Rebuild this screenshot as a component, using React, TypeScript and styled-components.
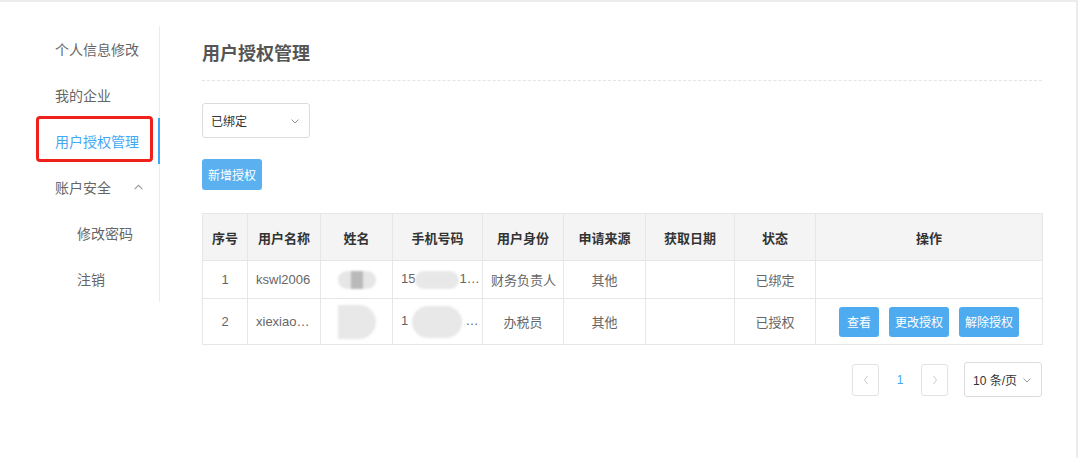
import React from 'react';
import styled, { createGlobalStyle } from 'styled-components';

const GlobalStyle = createGlobalStyle`
  html, body {
    margin: 0;
    padding: 0;
    background: #fff;
  }
  body {
    font-family: "Liberation Sans", "Noto Sans CJK SC", sans-serif;
  }
`;

const Page = styled.div`
  box-sizing: border-box;
  width: 1078px;
  height: 458px;
  border-top: 2px solid #ececec;
  border-right: 2px solid #ececec;
  display: flex;
  align-items: flex-start;
`;

const Side = styled.nav`
  margin-top: 24px;
  width: 160px;
  border-right: 1px solid #ebebeb;
  box-sizing: border-box;
  display: flex;
  flex-direction: column;
`;

const SideItem = styled.div<{ $active?: boolean; $sub?: boolean }>`
  position: relative;
  height: 46px;
  display: flex;
  align-items: center;
  justify-content: space-between;
  padding-left: ${(p) => (p.$sub ? '77px' : '55px')};
  padding-right: 14px;
  margin-right: -1px;
  font-size: 14px;
  color: ${(p) => (p.$active ? '#3fa9f5' : '#666')};
  border-right: 2px solid ${(p) => (p.$active ? '#3fa9f5' : 'transparent')};
`;

const Mark = styled.span`
  position: absolute;
  left: 36px;
  top: -2px;
  width: 117px;
  height: 46px;
  box-sizing: border-box;
  border: 3px solid #f0201a;
  border-radius: 4px;
`;

const Main = styled.main`
  margin-left: 42px;
  width: 840px;
  padding-top: 36px;
`;

const Title = styled.h1`
  margin: 0;
  font-size: 18px;
  line-height: 32px;
  font-weight: 600;
  color: #555;
  padding-bottom: 10px;
  border-bottom: 1px dashed #e4e4e4;
`;

const Select = styled.div<{ $w: number }>`
  box-sizing: border-box;
  width: ${(p) => p.$w}px;
  height: 35px;
  border: 1px solid #dcdcdc;
  border-radius: 3px;
  display: flex;
  align-items: center;
  justify-content: space-between;
  padding: 0 9px 0 8px;
  font-size: 12px;
  color: #333;
`;

const FilterRow = styled.div`
  margin-top: 22px;
`;

const BlueBtn = styled.button<{ $h?: number; $light?: boolean }>`
  height: ${(p) => p.$h ?? 30}px;
  min-width: 40px;
  padding: 0 6px;
  border: none;
  border-radius: 3px;
  background: ${(p) => (p.$light ? '#5bb0f0' : '#4eabef')};
  color: #fff;
  font-family: "Liberation Sans", "Noto Sans CJK SC", sans-serif;
  font-size: 12px;
`;

const AddRow = styled.div`
  margin-top: 21px;
`;

const Table = styled.table`
  margin-top: 23px;
  width: 840px;
  border-collapse: collapse;
  table-layout: fixed;
  font-size: 13px;
`;

const Th = styled.th`
  height: 46px;
  background: #f4f4f4;
  border: 1px solid #e6e6e6;
  color: #333;
  font-weight: 600;
  text-align: center;
  padding: 0 4px;
`;

const Td = styled.td<{ $h: number; $left?: boolean }>`
  height: ${(p) => p.$h}px;
  border: 1px solid #e6e6e6;
  color: #666;
  text-align: ${(p) => (p.$left ? 'left' : 'center')};
  padding: 0 8px;
  white-space: nowrap;
  overflow: hidden;
`;

const Blur = styled.span<{ $w: number; $h: number; $dark?: boolean; $square?: boolean }>`
  display: inline-block;
  vertical-align: middle;
  width: ${(p) => p.$w}px;
  height: ${(p) => p.$h}px;
  border-radius: ${(p) => (p.$square ? `0 ${p.$h / 2}px ${p.$h / 2}px 0` : `${p.$h / 2}px`)};
  background: ${(p) => (p.$dark ? 'linear-gradient(90deg,#e6e6e6 0 35%,#b9b9b9 35% 65%,#e6e6e6 65%)' : '#e8e8e8')};
  filter: blur(1.2px);
`;

const Ops = styled.div`
  display: flex;
  justify-content: center;
  gap: 10px;
`;

const Pager = styled.div`
  margin-top: 17px;
  display: flex;
  justify-content: flex-end;
  align-items: center;
`;

const PageBox = styled.div`
  box-sizing: border-box;
  width: 27px;
  height: 32px;
  border: 1px solid #e2e2e2;
  border-radius: 3px;
  display: flex;
  align-items: center;
  justify-content: center;
`;

const PageNum = styled.span`
  width: 42px;
  text-align: center;
  color: #3fa9f5;
  font-size: 12px;
`;

const SizeWrap = styled.div`
  margin-left: 16px;
`;

const Chev = ({ up = false, color = '#999', size = 10 }: { up?: boolean; color?: string; size?: number }) => (
  <svg width={size} height={size} viewBox="0 0 10 10">
    <polyline
      points={up ? '1.5,6.5 5,3 8.5,6.5' : '1.5,3.5 5,7 8.5,3.5'}
      fill="none"
      stroke={color}
      strokeWidth="1"
    />
  </svg>
);

const Arrow = ({ left }: { left?: boolean }) => (
  <svg width="8" height="12" viewBox="0 0 8 12">
    <polyline points={left ? '5.5,2 2.5,6 5.5,10' : '2.5,2 5.5,6 2.5,10'} fill="none" stroke="#ccc" strokeWidth="1" />
  </svg>
);

const cols = [45, 73, 72, 90, 81, 82, 89, 81, 227];
const heads = ['序号', '用户名称', '姓名', '手机号码', '用户身份', '申请来源', '获取日期', '状态', '操作'];

export default function App() {
  return (
    <Page>
      <GlobalStyle />
      <Side>
        <SideItem>个人信息修改</SideItem>
        <SideItem>我的企业</SideItem>
        <SideItem $active>
          用户授权管理
          <Mark />
        </SideItem>
        <SideItem>
          账户安全
          <Chev up size={11} />
        </SideItem>
        <SideItem $sub>修改密码</SideItem>
        <SideItem $sub>注销</SideItem>
      </Side>
      <Main>
        <Title>用户授权管理</Title>
        <FilterRow>
          <Select $w={108}>
            已绑定
            <Chev />
          </Select>
        </FilterRow>
        <AddRow>
          <BlueBtn $h={31} $light>新增授权</BlueBtn>
        </AddRow>
        <Table>
          <colgroup>
            {cols.map((w, i) => (
              <col key={i} style={{ width: w }} />
            ))}
          </colgroup>
          <thead>
            <tr>
              {heads.map((h) => (
                <Th key={h}>{h}</Th>
              ))}
            </tr>
          </thead>
          <tbody>
            <tr>
              <Td $h={37}>1</Td>
              <Td $h={37} $left>kswl2006</Td>
              <Td $h={37}>
                <Blur $w={38} $h={18} $dark />
              </Td>
              <Td $h={37} $left>
                15<Blur $w={44} $h={18} />1…
              </Td>
              <Td $h={37}>财务负责人</Td>
              <Td $h={37}>其他</Td>
              <Td $h={37} />
              <Td $h={37}>已绑定</Td>
              <Td $h={37} />
            </tr>
            <tr>
              <Td $h={45}>2</Td>
              <Td $h={45} $left>xiexiao…</Td>
              <Td $h={45}>
                <Blur $w={38} $h={34} $square />
              </Td>
              <Td $h={45} $left>
                1 <Blur $w={50} $h={32} /> …
              </Td>
              <Td $h={45}>办税员</Td>
              <Td $h={45}>其他</Td>
              <Td $h={45} />
              <Td $h={45}>已授权</Td>
              <Td $h={45}>
                <Ops>
                  <BlueBtn>查看</BlueBtn>
                  <BlueBtn>更改授权</BlueBtn>
                  <BlueBtn>解除授权</BlueBtn>
                </Ops>
              </Td>
            </tr>
          </tbody>
        </Table>
        <Pager>
          <PageBox>
            <Arrow left />
          </PageBox>
          <PageNum>1</PageNum>
          <PageBox>
            <Arrow />
          </PageBox>
          <SizeWrap>
            <Select $w={78}>
              10 条/页
              <Chev />
            </Select>
          </SizeWrap>
        </Pager>
      </Main>
    </Page>
  );
}
